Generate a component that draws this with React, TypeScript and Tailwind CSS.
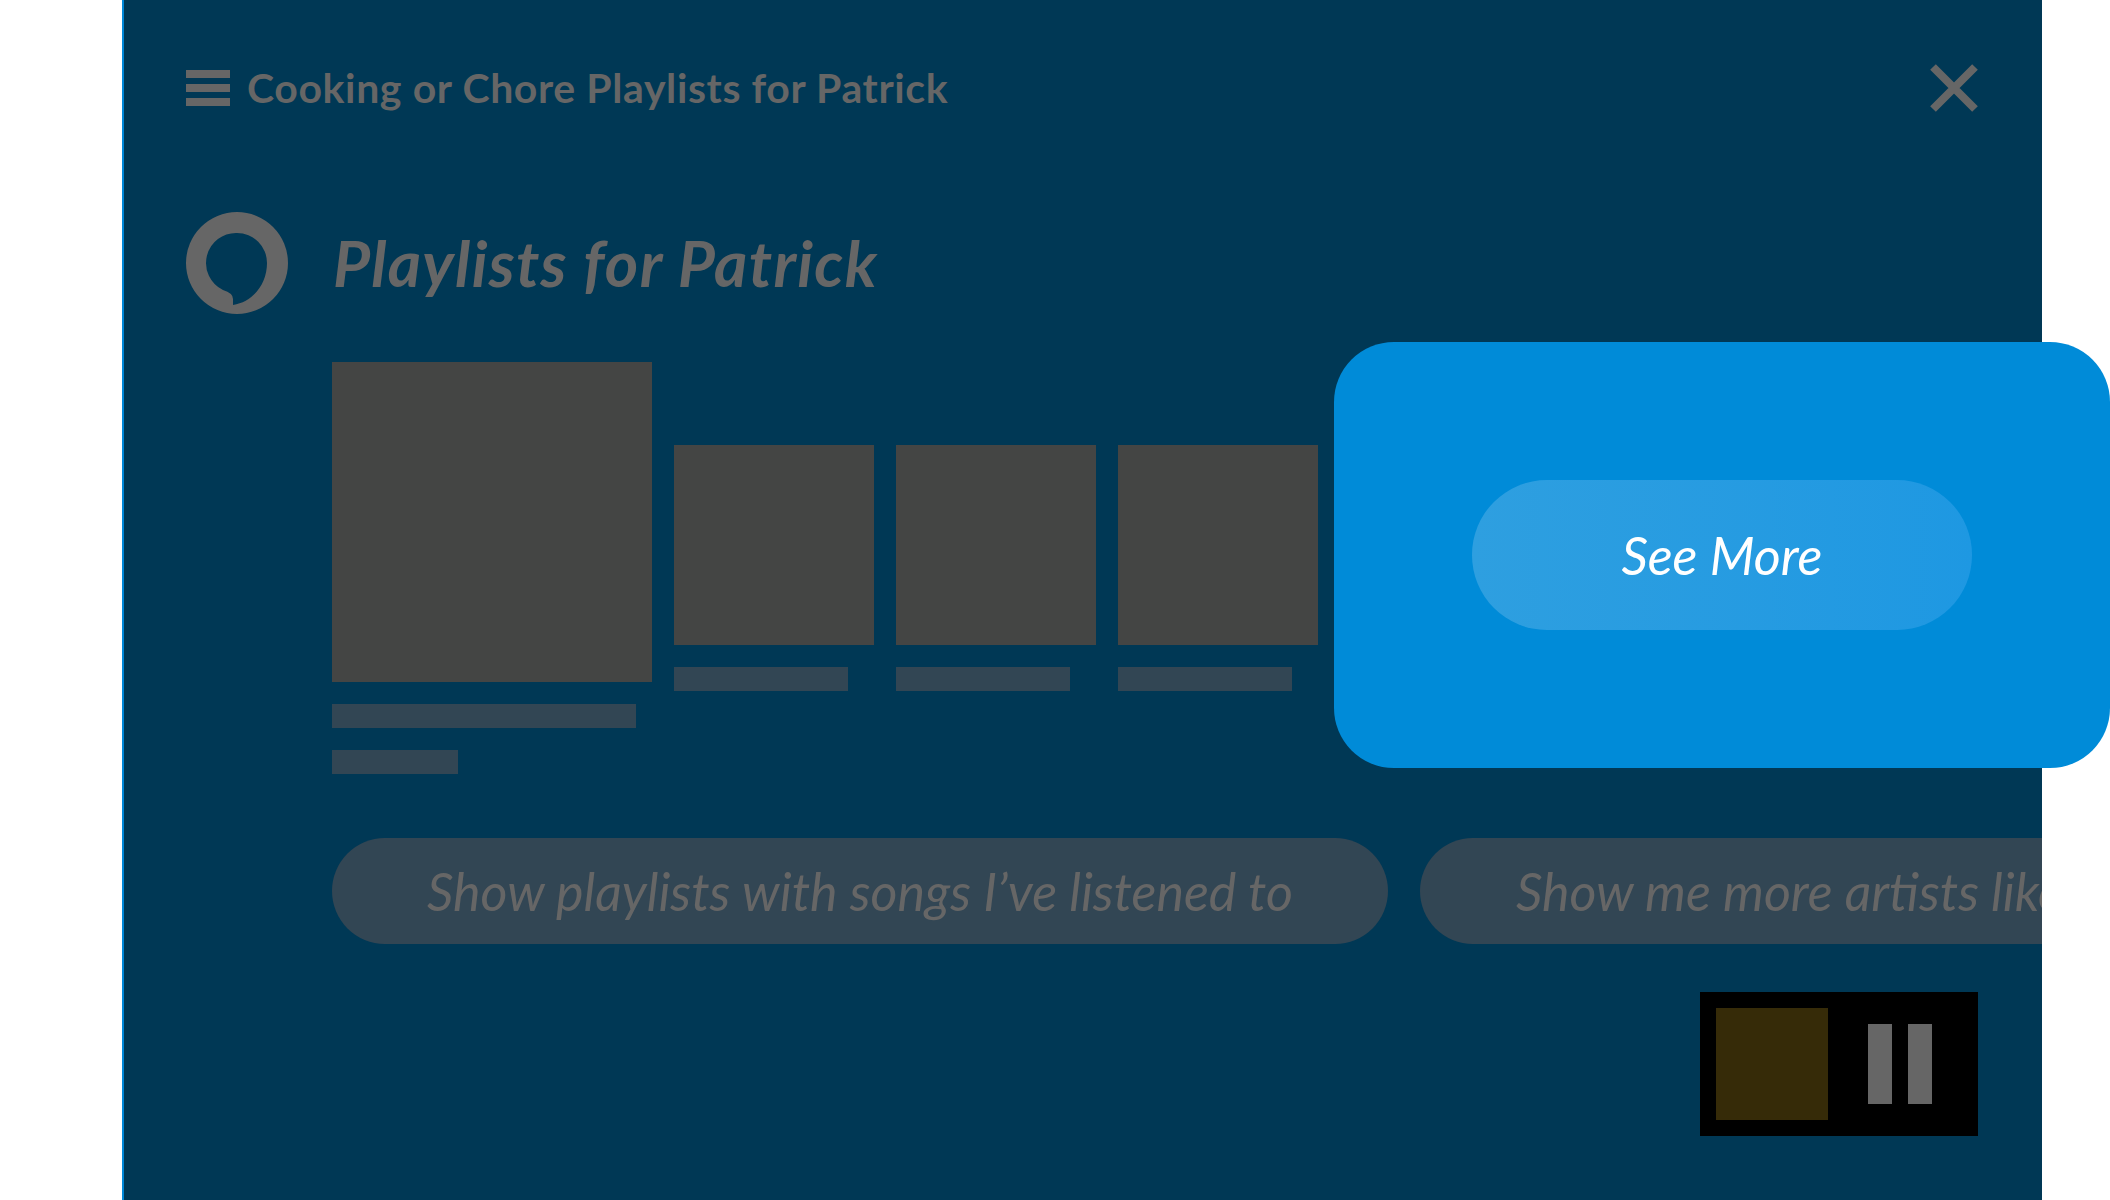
const font = "font-['Lato','Noto_Sans',sans-serif]";

export default function App() {
  const small = [0, 1, 2];
  return (
    <div className={`relative h-[1200px] w-[2110px] overflow-hidden bg-white ${font}`}>
      <div className="relative ml-[122px] h-[1200px] w-[1920px] overflow-hidden border-l-2 border-[#0088d8] bg-[#003855]">
        <div className="flex h-[112px] items-center justify-between pl-[62px] pr-[64px] pt-[64px]">
          <div className="flex items-center gap-[17px]">
            <div className="flex w-[44px] flex-col gap-[6px]">
              <div className="h-[8px] bg-[#666]" />
              <div className="h-[8px] bg-[#666]" />
              <div className="h-[8px] bg-[#666]" />
            </div>
            <span className="text-[41px] font-bold leading-[48px] tracking-[0.6px] text-[#666]">Cooking or Chore Playlists for Patrick</span>
          </div>
          <svg width="48" height="48" viewBox="0 0 48 48">
            <path d="M3 3 L45 45 M45 3 L3 45" stroke="#666" strokeWidth="8" />
          </svg>
        </div>
        <div className="mt-[100px] flex items-center gap-[45px] pl-[62px]">
          <svg width="102" height="102" viewBox="0 0 102 102">
            <path
              fillRule="evenodd"
              fill="#666"
              d="M51 0a51 51 0 1 1 0 102a51 51 0 1 1 0-102zM51 21A30 30 0 0 0 37 78Q47 81 47 87V93C67 90 81 72 81 51A30 30 0 0 0 51 21z"
            />
          </svg>
          <span className="text-[64px] font-bold italic leading-[76px] tracking-[1.3px] text-[#666]">Playlists for Patrick</span>
        </div>
        <div className="ml-[208px] mt-[48px] flex items-end gap-[22px]">
          <div>
            <div className="h-[320px] w-[320px] bg-[#444544]" />
            <div className="mt-[22px] h-[24px] w-[304px] bg-[#324654]" />
            <div className="mt-[22px] h-[24px] w-[126px] bg-[#324654]" />
          </div>
          {small.map((i) => (
            <div key={i} className="mb-[83px]">
              <div className="h-[200px] w-[200px] bg-[#444544]" />
              <div className="mt-[22px] h-[24px] w-[174px] bg-[#324654]" />
            </div>
          ))}
        </div>
        <div className="ml-[208px] mt-[64px] flex gap-[32px]">
          <div className="flex h-[106px] w-[1056px] shrink-0 items-center justify-center rounded-full bg-[#324654] text-[52px] italic text-[#666]">Show playlists with songs I’ve listened to</div>
          <div className="flex h-[106px] w-[900px] shrink-0 items-center rounded-full bg-[#324654] pl-[96px] text-[52px] italic text-[#666]">Show me more artists like</div>
        </div>
        <div className="absolute bottom-[64px] right-[64px] flex h-[144px] w-[278px] items-center gap-[40px] bg-black pl-[16px]">
          <div className="h-[112px] w-[112px] bg-[#362b08]" />
          <div className="flex gap-[16px]">
            <div className="h-[80px] w-[24px] bg-[#666]" />
            <div className="h-[80px] w-[24px] bg-[#666]" />
          </div>
        </div>
      </div>
      <div className="absolute left-[1334px] top-[342px] flex h-[426px] w-[776px] items-center justify-center rounded-[60px] bg-[#008bd8]">
        <div className="flex h-[150px] w-[500px] items-center justify-center rounded-full bg-gradient-to-r from-[#2e9fe0] to-[#1e98e2] text-[52px] italic text-white">See More</div>
      </div>
    </div>
  );
}
